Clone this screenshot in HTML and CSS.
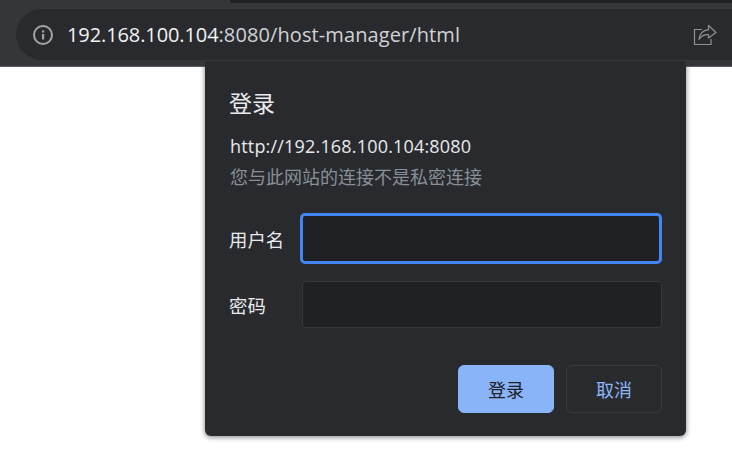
FILE: index.html
```html
<!DOCTYPE html>
<html lang="zh">
<head>
<meta charset="utf-8">
<title>登录</title>
<link rel="stylesheet" href="styles.css">
</head>
<body>
<header class="toolbar">
  <div class="tabstrip"><div class="tab"></div></div>
  <div class="omnibox">
    <svg class="info" width="20" height="20" viewBox="0 0 20 20"><circle cx="10" cy="10" r="9" fill="none" stroke="#a3a5a8" stroke-width="2"/><rect x="9" y="9" width="2.2" height="5.5" fill="#a3a5a8"/><rect x="9" y="5.4" width="2.2" height="2.2" fill="#a3a5a8"/></svg>
    <div class="url"><span class="host">192.168.100.104</span><span class="path">:8080/host-manager/html</span></div>
    <svg class="share" width="24" height="22" viewBox="0 0 24 22"><path d="M9 5.5H1.5V20.5H18V15" fill="none" stroke="#8f9194" stroke-width="1.2"/><path d="M15.5 1.5L23 8.5L15.5 14V10.6C11 10.4 8 12 6 15.5C6.5 10 10 6.3 15.5 5.6Z" fill="none" stroke="#8f9194" stroke-width="1.2" stroke-linejoin="round"/></svg>
  </div>
</header>
<main class="dialog">
  <h1 class="title">登录</h1>
  <div class="origin">http://192.168.100.104:8080</div>
  <div class="note">您与此网站的连接不是私密连接</div>
  <div class="fields">
    <label class="field"><span class="label">用户名</span><span class="input focus"></span></label>
    <label class="field"><span class="label">密码</span><span class="input"></span></label>
  </div>
  <div class="actions">
    <button class="btn primary">登录</button>
    <button class="btn">取消</button>
  </div>
</main>
</body>
</html>
```
FILE: styles.css
```css
* { box-sizing: border-box; }
html, body { margin: 0; height: 100%; }
body {
  background: #fff;
  font-family: "Open Sans", "Noto Sans CJK SC", sans-serif;
  overflow: hidden;
  position: relative;
}
.toolbar {
  height: 67px;
  background: #35363a;
  border-bottom: 1px solid #5c5d60;
  display: flex;
  flex-direction: column;
}
.tabstrip { height: 3px; display: flex; justify-content: flex-end; }
.tab { width: 502px; background: #202124; border-bottom-left-radius: 6px; }
.omnibox {
  margin: 6px 0 0 16px;
  height: 51px;
  background: #292a2d;
  border-radius: 26px 0 0 26px;
  display: flex;
  align-items: center;
  padding: 0 15px 0 17px;
}
.info { flex: none; margin-right: 14px; }
.url { flex: 1; font-size: 20px; white-space: nowrap; }
.host { color: #f1f3f4; letter-spacing: -0.1px; }
.path { color: #d0d3d6; letter-spacing: 0.1px; }
.share { flex: none; }
.dialog {
  position: absolute;
  left: 205px;
  top: 61px;
  width: 481px;
  height: 375px;
  background: #292a2d;
  border-radius: 0 0 6px 6px;
  box-shadow: 0 1px 4px 1px rgba(60, 64, 67, .5);
  padding: 27px 24px 0;
  color: #e8eaed;
  display: flex;
  flex-direction: column;
}
.title { margin: 0; font-size: 23px; line-height: 30px; font-weight: 400; color: #e8eaed; }
.origin { margin: 15px 0 0 1px; font-size: 18px; letter-spacing: 0.18px; line-height: 26px; color: #e8eaed; }
.note { margin: 5px 0 0 1px; font-size: 18px; line-height: 26px; color: #87909a; }
.fields { margin-top: 23px; display: flex; flex-direction: column; gap: 17px; }
.field { display: flex; align-items: center; }
.label { width: 73px; flex: none; font-size: 18.4px; color: #e8eaed; }
.input {
  width: 360px;
  height: 47px;
  background: #202124;
  border: 1px solid #37383c;
  border-radius: 4px;
}
.input.focus { border: 3px solid #4285f4; height: 51px; width: 364px; margin-left: -2px; border-radius: 5px; }
.actions { margin-top: 37px; display: flex; justify-content: flex-end; gap: 12px; }
.btn {
  width: 96px;
  height: 48px;
  font-family: inherit;
  font-size: 18px;
  border-radius: 6px;
  background: transparent;
  border: 1px solid #3a3b3f;
  color: #8ab4f8;
  padding: 0;
}
.btn.primary { background: #8ab4f8; border-color: #8ab4f8; color: #202124; }
```
